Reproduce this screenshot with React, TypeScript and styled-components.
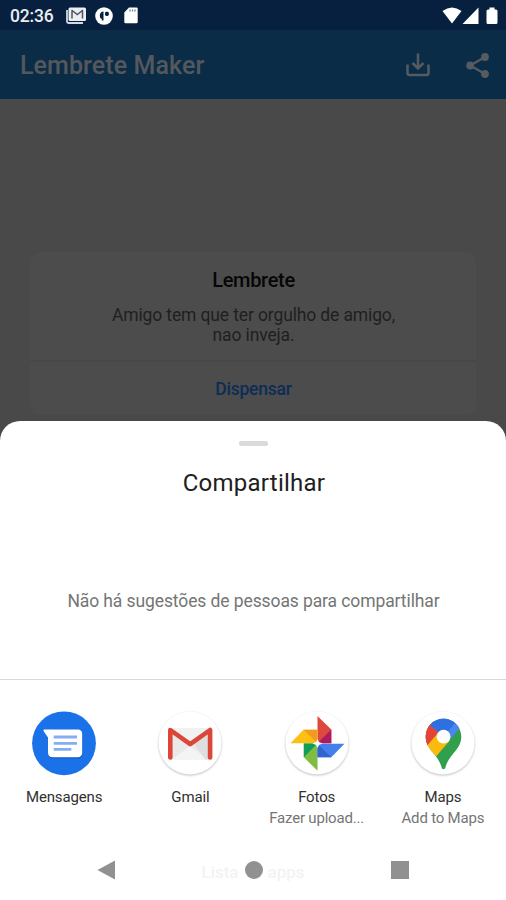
import React from "react";
import styled, { createGlobalStyle } from "styled-components";

interface ShareTarget {
  name: string;
  detail?: string;
  icon: React.ReactNode;
}

const MessagesIcon = () => (
  <AppIcon viewBox="0 0 64 64">
    <circle cx="32" cy="32.3" r="31.9" fill="#1b72e8" />
    <path d="M13 20.5H46a4.5 4.5 0 0 1 4.5 4.5V43a4.5 4.5 0 0 1-4.5 4.5H21a4.5 4.5 0 0 1-4.5-4.5V28z" fill="#1259bd" />
    <path d="M12.2 18.6H46a4.2 4.2 0 0 1 4.2 4.2V42a4.2 4.2 0 0 1-4.2 4.2H20.2A4.2 4.2 0 0 1 16 42V26.5L11.7 20.3Q10.9 18.6 12.2 18.6z" fill="#fff" />
    <path d="M21.7 26H45M21.7 32.3H45M21.7 38.4H39.3" stroke="#84aef2" strokeWidth="2.8" />
  </AppIcon>
);

const GmailIcon = () => (
  <AppIcon viewBox="0 0 64 64">
    <Disc />
    <path d="M12 17H52V48.5H12z" fill="#e9e9e9" />
    <path d="M14 48.5L32 35L50 48.5z" fill="#f4f4f4" />
    <path d="M14 20L32 33L50 20L50 17H14z" fill="#f1f1f1" />
    <path d="M36 32L50 22V48.5H47z" fill="#dedede" />
    <path d="M12.3 46.5V19L32.2 33.2L52.1 19V46.5" fill="none" stroke="#dc4638" strokeWidth="4.6" strokeLinecap="round" strokeLinejoin="round" />
  </AppIcon>
);

const PhotosIcon = () => (
  <AppIcon viewBox="0 0 64 64">
    <Disc />
    <path d="M32.5 5L46.3 18.5V32.3H32.5z" fill="#dc4a3e" />
    <path d="M46.3 18.5V32.3H32.5z" fill="#af1b62" />
    <path d="M5.5 32.3L18.5 18.7H32.5V32.3z" fill="#fbc013" />
    <path d="M18.5 18.7H32.5V32.3z" fill="#f49a20" />
    <path d="M32.5 59.7L18.8 46.3V32.6H32.5z" fill="#7ebd42" />
    <path d="M18.8 46.3V32.6H32.5z" fill="#109d58" />
    <path d="M59.5 32.7L46.3 46.3H32.5V32.7z" fill="#4480ed" />
    <path d="M46.3 46.3H32.5V32.7z" fill="#3164d0" />
    <path d="M32.5 28L34 31L37.5 32.5L34 34L32.5 37L31 34L27.5 32.5L31 31z" fill="#fff" />
  </AppIcon>
);

const MapsIcon = () => (
  <AppIcon viewBox="0 0 64 64">
    <Disc />
    <clipPath id="pin">
      <path d="M32.5 7.7C22.5 7.7 14.7 15.7 14.7 25.5C14.7 33.5 19 38 23.5 43.5C28 49 29.5 52.5 30.6 56.5C31 58.7 34 58.7 34.4 56.5C35.5 52.5 37 49 41.5 43.5C46 38 50.3 33.5 50.3 25.5C50.3 15.7 42.5 7.7 32.5 7.7z" />
    </clipPath>
    <g clipPath="url(#pin)">
      <path d="M8 4H56V64H8z" fill="#31a04d" />
      <path d="M8 36L32.6 25.7L39 29.3L23.5 47.3L8 46z" fill="#fabb0e" />
      <path d="M8 6H20L32.6 25.7L16.3 35.1L8 36z" fill="#e2443a" />
      <path d="M26.5 31L16.3 43L8 44V44L15.8 34.5L27 21.5L34 26z" fill="#fabb0e" />
      <path d="M8 6H20L27.6 21.2L15.8 34.8H8z" fill="#e2443a" />
      <path d="M19.4 14.3L27.6 21.2L32.6 25.7L38.2 29.5L48.8 17.2L56 4H10z" fill="#4a86ee" />
      <path d="M19.4 14.3L32.6 25.7L44.5 11.5L38 2H10z" fill="#2f70e0" />
    </g>
    <circle cx="32.6" cy="25.7" r="6.9" fill="#fff" />
  </AppIcon>
);

const targets: ShareTarget[] = [
  { name: "Mensagens", icon: <MessagesIcon /> },
  { name: "Gmail", icon: <GmailIcon /> },
  { name: "Fotos", detail: "Fazer upload...", icon: <PhotosIcon /> },
  { name: "Maps", detail: "Add to Maps", icon: <MapsIcon /> },
];

const StatusBar = () => (
  <StatusRow>
    <Clock>02:36</Clock>
    <svg width="20" height="17" viewBox="0 0 20 17">
      <path d="M1 3V14.5Q1 16 2.5 16H17" fill="none" stroke="#d5d9e0" strokeWidth="1.8" />
      <rect x="2.5" y="0.5" width="17.5" height="13.5" rx="1.5" fill="#eceef1" />
      <path d="M5.5 3L11.3 7.5L17 3M6 4V11.5M16.5 4V11.5" fill="none" stroke="#4a5567" strokeWidth="1.5" />
    </svg>
    <svg width="18" height="18" viewBox="0 0 18 18">
      <circle cx="9" cy="9" r="8.8" fill="#fff" />
      <path d="M8.5 4.5V13.5H6.8V12Q4.8 11.5 4.8 9Q4.8 4.5 8.5 4.5z" fill="#07203f" />
      <rect x="10" y="4.8" width="3.8" height="4.2" rx="1.4" fill="#07203f" />
    </svg>
    <SdCard width="14" height="17" viewBox="0 0 14 17">
      <path d="M5 0.5H12.5Q13.7 0.5 13.7 1.7V15Q13.7 16.3 12.5 16.3H1.7Q0.3 16.3 0.3 15V5.5z" fill="#fff" />
      <path d="M6 2.5V4.5M8.500 2.5V4.5M11 2.5V4.5" stroke="#718094" strokeWidth="1.3" />
    </SdCard>
    <Signals width="56" height="18" viewBox="0 0 56 18">
      <path d="M0.5 4Q10 -3 19.5 4L10 16.5z" fill="#fff" />
      <path d="M36.5 0.5V17H20.5z" fill="#fff" />
      <path d="M47.5 0.5H52.5V2.5H54Q55.5 2.5 55.5 4V15.5Q55.5 17 54 17H46Q44.5 17 44.5 15.5V4Q44.5 2.5 46 2.5H47.5z" fill="#fff" />
    </Signals>
  </StatusRow>
);

const Header = () => (
  <Toolbar>
    <AppTitle>Lembrete Maker</AppTitle>
    <svg width="24" height="25" viewBox="0 0 24 25">
      <path d="M1.5 11.5V20Q1.5 22 3.5 22H20.5Q22.5 22 22.5 20V11.5" fill="none" stroke="#565b60" strokeWidth="2.5" />
      <path d="M12 0.5V15M6.5 10L12 15.5L17.5 10" fill="none" stroke="#565b60" strokeWidth="2.5" />
    </svg>
    <ShareGlyph width="24" height="26" viewBox="0 0 24 26">
      <path d="M19 4L4.2 12.5L19 21" fill="none" stroke="#565b60" strokeWidth="2.4" />
      <circle cx="19" cy="4" r="3.9" fill="#565b60" />
      <circle cx="4.2" cy="12.5" r="3.9" fill="#565b60" />
      <circle cx="19" cy="21" r="3.9" fill="#565b60" />
    </ShareGlyph>
  </Toolbar>
);

const ShareSheet = () => (
  <Sheet>
    <Handle />
    <SheetTitle>Compartilhar</SheetTitle>
    <EmptyPeople>Não há sugestões de pessoas para compartilhar</EmptyPeople>
    <Targets>
      {targets.map((target) => (
        <Target key={target.name}>
          {target.icon}
          <TargetName>{target.name}</TargetName>
          {target.detail && <TargetDetail>{target.detail}</TargetDetail>}
        </Target>
      ))}
    </Targets>
    <BottomArea>
      <AppsList>
        <span>Lista</span>
        <span>apps</span>
      </AppsList>
      <NavBar>
        <svg width="19" height="20" viewBox="0 0 19 20">
          <path d="M18 0.5V19.5L0.5 10z" fill="#919191" />
        </svg>
        <HomeButton />
        <RecentsButton />
      </NavBar>
    </BottomArea>
  </Sheet>
);

const App: React.FC = () => {
  return (
    <Screen>
      <GlobalStyle />
      <StatusBar />
      <Header />
      <Content>
        <Card>
          <CardBody>
            <CardTitle>Lembrete</CardTitle>
            <CardText>
              Amigo tem que ter orgulho de amigo,
              <br />
              nao inveja.
            </CardText>
          </CardBody>
          <Dismiss>Dispensar</Dismiss>
        </Card>
      </Content>
      <ShareSheet />
    </Screen>
  );
};

export default App;

const GlobalStyle = createGlobalStyle`
  body {
    margin: 0;
    background: #494949;
    font-family: Roboto, "Liberation Sans", sans-serif;
  }

  * {
    box-sizing: border-box;
  }

  svg {
    display: block;
    flex: none;
  }
`;

const Screen = styled.div`
  width: 506px;
  height: 900px;
  display: flex;
  flex-direction: column;
  background: #494949;
  overflow: hidden;
`;

const StatusRow = styled.div`
  height: 30px;
  flex: none;
  display: flex;
  align-items: center;
  gap: 9px;
  padding: 1px 8px 0 10px;
  background: #07203f;
`;

const Clock = styled.span`
  width: 47px;
  color: #e9edf2;
  font-size: 17.5px;
  font-weight: 500;
  letter-spacing: -0.2px;
  white-space: nowrap;
`;

const SdCard = styled.svg`
  margin-left: 2px;
`;

const Signals = styled.svg`
  margin-left: auto;
`;

const Toolbar = styled.header`
  height: 69px;
  flex: none;
  display: flex;
  align-items: center;
  padding: 2px 16px 0 20px;
  background: #0b2c47;
`;

const AppTitle = styled.h1`
  flex: 1;
  margin: 0;
  color: #54585c;
  font-size: 25px;
  font-weight: 500;
  line-height: 30px;
  letter-spacing: 0.1px;
`;

const ShareGlyph = styled.svg`
  margin-left: 36px;
`;

const Content = styled.main`
  height: 322px;
  flex: none;
  padding: 153px 30px 0;
`;

const Card = styled.section`
  height: 163px;
  border-radius: 10px;
  background: #4c4c4c;
  text-align: center;
  overflow: hidden;
`;

const CardBody = styled.div`
  height: 110px;
  padding: 16px 0 0 1px;
  border-bottom: 2px solid #484848;
`;

const CardTitle = styled.h2`
  margin: 0;
  color: #060606;
  font-size: 20px;
  font-weight: 500;
  line-height: 24px;
  letter-spacing: -0.3px;
`;

const CardText = styled.p`
  margin: 13px 0 0;
  color: #1f1f1f;
  font-size: 17.5px;
  line-height: 20px;
  letter-spacing: -0.13px;
`;

const Dismiss = styled.button`
  width: 100%;
  height: 53px;
  padding: 0 0 0 1px;
  border: none;
  background: transparent;
  color: #0c2c58;
  font-family: inherit;
  font-size: 17.5px;
  font-weight: 500;
  letter-spacing: -0.2px;
`;

const Sheet = styled.section`
  height: 479px;
  flex: none;
  display: flex;
  flex-direction: column;
  align-items: center;
  padding: 20px 0 0;
  border-radius: 20px 20px 0 0;
  background: #fff;
`;

const Handle = styled.div`
  width: 29px;
  height: 5px;
  margin-left: 1px;
  border-radius: 2px;
  background: #dadada;
`;

const SheetTitle = styled.h2`
  margin: 22px 0 0 2px;
  color: #202020;
  font-size: 24px;
  font-weight: 400;
  line-height: 30px;
  letter-spacing: 0.25px;
`;

const EmptyPeople = styled.p`
  width: 100%;
  height: 183px;
  margin: 0;
  padding: 92px 0 0 1px;
  border-bottom: 1px solid #d9d9d9;
  color: #757575;
  font-size: 17.5px;
  line-height: 22px;
  letter-spacing: -0.1px;
  text-align: center;
`;

const Targets = styled.ul`
  width: 100%;
  height: 159px;
  display: grid;
  grid-template-columns: repeat(4, 1fr);
  margin: 0;
  padding: 31px 0 0 1px;
  list-style: none;
`;

const Target = styled.li`
  display: flex;
  flex-direction: column;
  align-items: center;
`;

const AppIcon = styled.svg`
  width: 64px;
  height: 64px;
  overflow: visible;
`;

const Disc = styled.circle.attrs({ cx: 32, cy: 32, r: 31.5, fill: "#fff" })`
  filter: drop-shadow(0 1px 1px rgba(0, 0, 0, 0.25));
`;

const TargetName = styled.span`
  margin-top: 12px;
  color: #303030;
  font-size: 15px;
  line-height: 20px;
  letter-spacing: -0.15px;
`;

const TargetDetail = styled.span`
  margin-top: 1px;
  color: #757575;
  font-size: 15px;
  line-height: 20px;
  letter-spacing: -0.2px;
`;

const BottomArea = styled.div`
  width: 100%;
  display: grid;
  align-items: center;
  height: 60px;
  margin-top: 3px;

  > * {
    grid-area: 1 / 1;
  }
`;

const AppsList = styled.div`
  display: flex;
  justify-content: center;
  gap: 29px;
  padding-top: 3px;
  color: #f3f3f3;
  font-size: 17px;
  font-weight: 500;
  line-height: 22px;
`;

const NavBar = styled.nav`
  display: flex;
  align-items: center;
  justify-content: space-between;
  padding: 0 97px 0 97px;
`;

const HomeButton = styled.div`
  width: 18px;
  height: 18px;
  border-radius: 50%;
  background: #919191;
`;

const RecentsButton = styled.div`
  width: 18px;
  height: 18px;
  background: #919191;
`;
